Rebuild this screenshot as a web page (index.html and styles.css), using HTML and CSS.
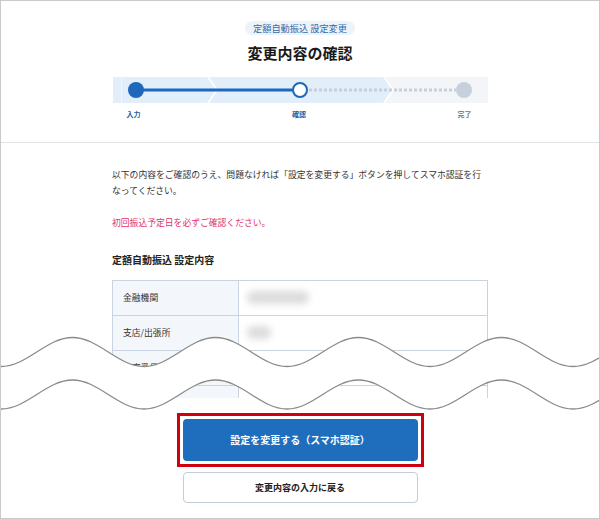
FILE: index.html
```html
<!DOCTYPE html>
<html lang="ja">
  <head>
    <meta charset="UTF-8" />
    <meta name="viewport" content="width=device-width, initial-scale=1.0" />
    <title>変更内容の確認</title>
    <link rel="stylesheet" href="styles.css">
  </head>
  <body>
    <div class="frame">
      <header class="head">
        <span class="badge">定額自動振込 設定変更</span>
        <h1 class="title">変更内容の確認</h1>
        <svg class="steps" width="375" height="26" viewBox="0 0 375 26">
          <polygon points="0,0 94,0 103,13 94,26 0,26" fill="#e2eefa" />
          <polygon points="96,0 270,0 279,13 270,26 96,26 105,13" fill="#e2eefa" />
          <polygon points="272,0 375,0 375,26 272,26 281,13" fill="#f3f5f8" />
          <rect x="8" y="0" width="1" height="26" fill="#eef5fd" />
          <line x1="23" y1="13" x2="187" y2="13" stroke="#1d68bb" stroke-width="3" />
          <line x1="196" y1="13" x2="343" y2="13" stroke="#c6d0dc" stroke-width="3" stroke-dasharray="3 2" />
          <circle cx="23" cy="13" r="8" fill="#1d68bb" />
          <circle cx="187" cy="13" r="7" fill="#fff" stroke="#1d68bb" stroke-width="2" />
          <circle cx="351" cy="13" r="8" fill="#c6d0dc" />
        </svg>
        <div class="step-labels">
          <span class="on">入力</span>
          <span class="on">確認</span>
          <span>完了</span>
        </div>
      </header>

      <main class="content">
        <p class="lead">以下の内容をご確認のうえ、問題なければ「設定を変更する」ボタンを押してスマホ認証を行なってください。</p>
        <p class="notice">初回振込予定日を必ずご確認ください。</p>
        <h2 class="section">定額自動振込 設定内容</h2>
        <div class="table-clip">
          <table class="detail">
            <tr><th>金融機関</th><td><span class="blur wide"></span></td></tr>
            <tr><th>支店/出張所</th><td><span class="blur short"></span></td></tr>
            <tr><th>口座番号</th><td></td></tr>
            <tr><th></th><td></td></tr>
          </table>
        </div>

        <div class="actions">
          <div class="highlight">
            <button class="btn primary" type="button">設定を変更する（スマホ認証）</button>
          </div>
          <button class="btn secondary" type="button">変更内容の入力に戻る</button>
        </div>
      </main>

      <!-- 省略を示す波線 -->
      <svg class="cut" width="598" height="100" viewBox="1 320 598 100">
        <defs>
          <mask id="gap" maskUnits="userSpaceOnUse" x="-100" y="300" width="800" height="200">
            <path fill="#fff" d="M -70.5 337.5 C -44.46 337.5 -25.04 366.5 1 366.5 S 46.46 337.5 72.5 337.5 S 117.96 366.5 144 366.5 S 189.46 337.5 215.5 337.5 S 260.96 366.5 287 366.5 S 332.46 337.5 358.5 337.5 S 403.96 366.5 430 366.5 S 475.46 337.5 501.5 337.5 S 546.96 366.5 573 366.5 S 618.46 337.5 644.5 337.5 L 644.5 480 L -70.5 480 Z" />
            <path fill="#000" transform="translate(0 42.5)" d="M -70.5 337.5 C -44.46 337.5 -25.04 366.5 1 366.5 S 46.46 337.5 72.5 337.5 S 117.96 366.5 144 366.5 S 189.46 337.5 215.5 337.5 S 260.96 366.5 287 366.5 S 332.46 337.5 358.5 337.5 S 403.96 366.5 430 366.5 S 475.46 337.5 501.5 337.5 S 546.96 366.5 573 366.5 S 618.46 337.5 644.5 337.5 L 644.5 480 L -70.5 480 Z" />
          </mask>
          <path id="wave" d="M -70.5 337.5 C -44.46 337.5 -25.04 366.5 1 366.5 S 46.46 337.5 72.5 337.5 S 117.96 366.5 144 366.5 S 189.46 337.5 215.5 337.5 S 260.96 366.5 287 366.5 S 332.46 337.5 358.5 337.5 S 403.96 366.5 430 366.5 S 475.46 337.5 501.5 337.5 S 546.96 366.5 573 366.5 S 618.46 337.5 644.5 337.5" />
        </defs>
        <rect x="0" y="320" width="600" height="100" fill="#fff" mask="url(#gap)" />
        <use href="#wave" fill="none" stroke="#8a8a8a" stroke-width="1.3" />
        <use href="#wave" transform="translate(0 42.5)" fill="none" stroke="#8a8a8a" stroke-width="1.3" />
      </svg>
    </div>
  </body>
</html>
```

FILE: styles.css
```css
body {
  margin: 0;
  font-family: "Noto Sans CJK JP", "Noto Sans", sans-serif;
  color: #333;
  background-color: #fff;
}

.frame {
  position: relative;
  width: 600px;
  height: 519px;
  box-sizing: border-box;
  border: 1px solid #cacaca;
  overflow: hidden;
}

/* ヘッダー */
.head {
  display: flex;
  flex-direction: column;
  align-items: center;
  height: 142px;
  box-sizing: border-box;
  padding-top: 20px;
  border-bottom: 1px solid #dfe4e8;
}

.badge {
  height: 14px;
  line-height: 14px;
  padding: 0 8px;
  border-radius: 7px;
  background-color: #edf3f9;
  color: #2d6cb0;
  font-size: 9.2px;
}

.title {
  margin: 8px 0 0;
  font-size: 15px;
  line-height: 20px;
  font-weight: bold;
  color: #1a1a1a;
}

.steps {
  display: block;
  margin-top: 14px;
}

.step-labels {
  display: flex;
  justify-content: space-between;
  width: 375px;
  box-sizing: border-box;
  padding: 0 16px 0 14px;
  margin-top: 6px;
  font-size: 7px;
  line-height: 10px;
  font-weight: bold;
  color: #777;
}

.step-labels .on {
  color: #1d5fa8;
}

/* 本文 */
.content {
  width: 376px;
  margin: 0 auto;
  padding-top: 24px;
}

.lead,
.notice {
  margin: 0;
  font-size: 8.8px;
  line-height: 15.5px;
}

.notice {
  margin-top: 17px;
  color: #e2336b;
}

.section {
  margin: 21px 0 0;
  font-size: 10px;
  line-height: 15px;
  font-weight: bold;
  color: #222;
}

.table-clip {
  margin-top: 13px;
  height: 118px;
  overflow: hidden;
}

.detail {
  width: 100%;
  border-collapse: collapse;
}

.detail th,
.detail td {
  height: 35px;
  padding: 0 8px;
  border: 1px solid #c9d4e0;
  box-sizing: border-box;
  font-size: 8.8px;
}

.detail th {
  width: 126px;
  padding: 0 10px;
  background-color: #f3f6fa;
  text-align: left;
  font-weight: normal;
  color: #333;
}

.blur {
  display: block;
  height: 13px;
  border-radius: 6px;
  background-color: #dcdcdc;
  filter: blur(3.5px);
}

.blur.wide {
  width: 62px;
}

.blur.short {
  width: 24px;
}

/* ボタン */
.actions {
  display: flex;
  flex-direction: column;
  align-items: center;
  margin-top: 15px;
}

.highlight {
  border: 3px solid #d0000e;
  padding: 3px;
}

.btn {
  display: block;
  width: 235px;
  font-family: inherit;
  font-weight: bold;
  cursor: pointer;
}

.btn.primary {
  height: 42px;
  border: none;
  border-radius: 4px;
  background-color: #1f6ebd;
  color: #fff;
  font-size: 10px;
}

.btn.secondary {
  height: 31px;
  margin-top: 5px;
  border: 1px solid #c3ccd7;
  border-radius: 4px;
  background-color: #fff;
  color: #222;
  font-size: 9px;
}

.cut {
  position: absolute;
  top: 319px;
  left: 0;
  display: block;
}
```
